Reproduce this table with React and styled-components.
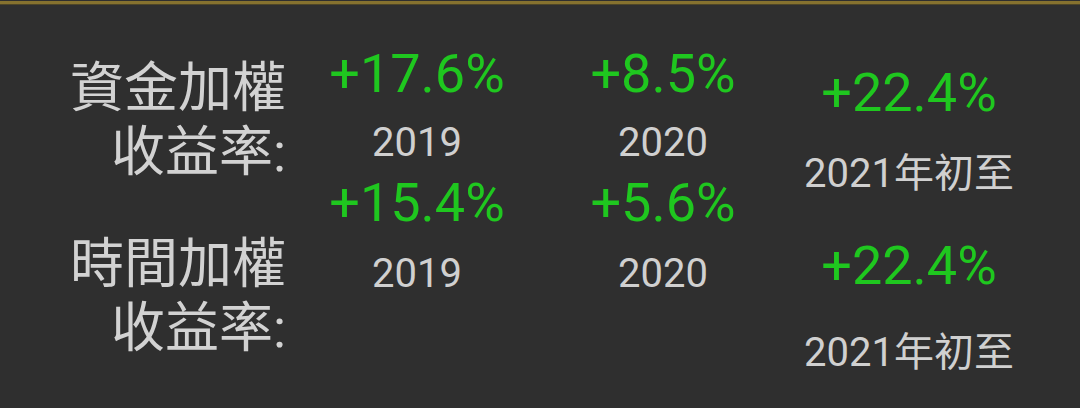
import React from 'react'
import styled, { createGlobalStyle } from 'styled-components'

const GlobalStyle = createGlobalStyle`
  html, body {
    margin: 0;
    padding: 0;
    background: #2f2f2f;
  }
`

const Screen = styled.div`
  width: 1080px;
  height: 408px;
  overflow: hidden;
  background: #2f2f2f;
  font-family: Roboto, "Noto Sans CJK TC", sans-serif;
`

const TopRule = styled.div`
  margin-top: 1px;
  height: 3px;
  background: #86722f;
  border-bottom: 1px solid #4e4628;
`

const Board = styled.div`
  padding-top: 35px;
`

const Section = styled.div`
  display: grid;
  grid-template-columns: 290px 254px 238px 254px;
  align-items: start;
  height: ${p => p.$height}px;
`

const Label = styled.div`
  padding-top: ${p => p.$top}px;
  padding-right: 4px;
  text-align: right;
  font-size: 54px;
  line-height: 64px;
  color: #d2d2d2;
  white-space: nowrap;
`

const Cell = styled.div`
  display: flex;
  flex-direction: column;
  align-items: center;
  padding-top: ${p => p.$top}px;
  gap: ${p => p.$gap}px;
  white-space: nowrap;
`

const Value = styled.div`
  font-size: 54px;
  line-height: 54px;
  color: #1fc71f;
`

const Period = styled.div`
  font-size: 40px;
  line-height: 40px;
  color: #d0d0d0;
`

const rows = [
  {
    height: 136,
    label: ['資金加權', '收益率:'],
    labelTop: 17,
    cells: [
      { value: '+17.6%', period: '2019', top: 7, gap: 22 },
      { value: '+8.5%', period: '2020', top: 7, gap: 22 },
      { value: '+22.4%', period: '2021年初至', top: 26, gap: 34 }
    ]
  },
  {
    height: 230,
    label: ['時間加權', '收益率:'],
    labelTop: 57,
    cells: [
      { value: '+15.4%', period: '2019', top: 0, gap: 24 },
      { value: '+5.6%', period: '2020', top: 0, gap: 24 },
      { value: '+22.4%', period: '2021年初至', top: 63, gap: 40 }
    ]
  }
]

const App = () => (
  <Screen>
    <GlobalStyle />
    <TopRule />
    <Board>
      {rows.map(row => (
        <Section key={row.label[0]} $height={row.height}>
          <Label $top={row.labelTop}>
            {row.label.map(line => <div key={line}>{line}</div>)}
          </Label>
          {row.cells.map((cell, i) => (
            <Cell key={i} $top={cell.top} $gap={cell.gap}>
              <Value>{cell.value}</Value>
              <Period>{cell.period}</Period>
            </Cell>
          ))}
        </Section>
      ))}
    </Board>
  </Screen>
)

export default App
